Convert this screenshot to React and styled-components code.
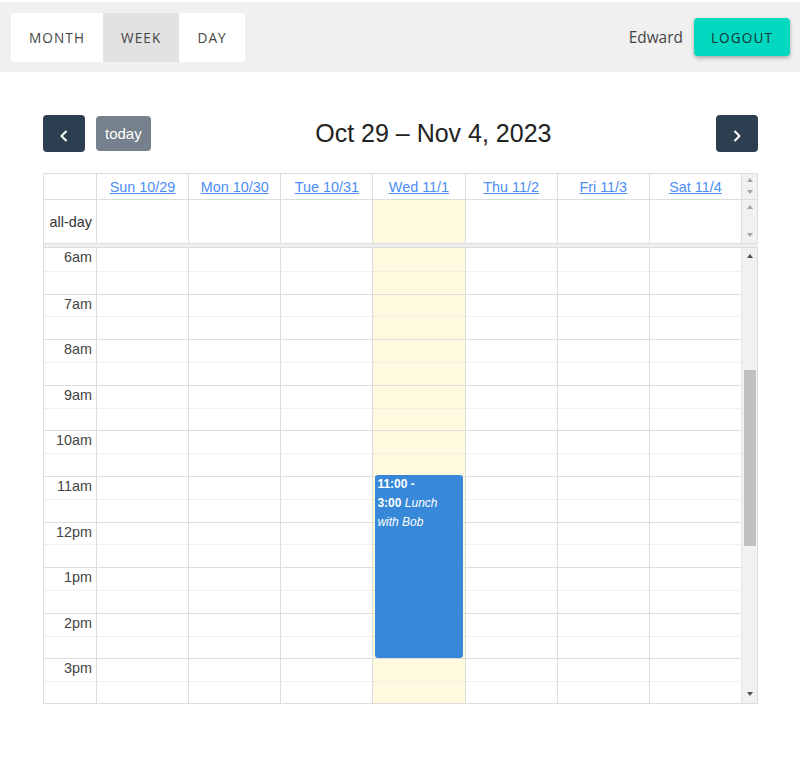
import React from 'react'
import styled, { createGlobalStyle } from 'styled-components';

const GlobalStyle = createGlobalStyle`
  html, body {
    margin: 0;
    padding: 0;
    background: #fff;
  }
  body {
    font-family: "Liberation Sans", Arial, sans-serif;
  }
`;

const SLOT = 22.8;
const HOURS = ['6am', '7am', '8am', '9am', '10am', '11am', '12pm', '1pm', '2pm', '3pm'];
const DAYS = ['Sun 10/29', 'Mon 10/30', 'Tue 10/31', 'Wed 11/1', 'Thu 11/2', 'Fri 11/3', 'Sat 11/4'];
const TODAY = 3;

const TopBar = styled.header`
  margin-top: 2px;
  height: 70px;
  background: #f0f0f0;
  display: flex;
  justify-content: space-between;
  align-items: center;
  padding: 0 10px 0 11px;
  box-sizing: border-box;
  font-family: "Open Sans", sans-serif;
`;

const ViewGroup = styled.div`
  display: flex;
  height: 49px;
  background: #fff;
  border-radius: 4px;
  overflow: hidden;
`;

const ViewButton = styled.button`
  border: none;
  background: ${p => (p.$active ? '#e2e2e2' : '#fff')};
  padding: 0 18px;
  font-family: "Open Sans", sans-serif;
  font-size: 13.6px;
  letter-spacing: 1.1px;
  color: #444;
  text-transform: uppercase;
  cursor: pointer;
`;

const User = styled.div`
  display: flex;
  align-items: center;
  gap: 11px;
`;

const UserName = styled.span`
  font-size: 15.4px;
  color: #444;
`;

const LogoutButton = styled.button`
  height: 38px;
  padding: 0 17px;
  border: none;
  border-radius: 4px;
  background: #00d9c0;
  box-shadow: 0 2px 4px rgba(0, 0, 0, 0.3);
  font-family: "Open Sans", sans-serif;
  font-size: 13.6px;
  letter-spacing: 1.1px;
  color: #173333;
  cursor: pointer;
`;

const Calendar = styled.div`
  margin: 43px 42px 0 43px;
`;

const Toolbar = styled.div`
  display: flex;
  justify-content: space-between;
  align-items: center;
  height: 37px;
  margin-bottom: 21px;
`;

const Chunk = styled.div`
  display: flex;
  align-items: center;
  gap: 11px;
`;

const NavButton = styled.button`
  width: 42px;
  height: 37px;
  border: none;
  border-radius: 4px;
  background: #2c3e50;
  display: flex;
  align-items: center;
  justify-content: center;
  padding: 4px 0 0;
`;

const TodayButton = styled.button`
  height: 35px;
  padding: 0 9px;
  border: none;
  border-radius: 4px;
  background: #2c3e50;
  opacity: 0.65;
  color: #fff;
  font-family: "Liberation Sans", Arial, sans-serif;
  font-size: 15px;
`;

const Title = styled.h2`
  margin: 0;
  font-weight: 400;
  font-size: 25px;
  color: #222;
`;

const Grid = styled.div`
  border: 1px solid #ddd;
  border-right: none;
  border-bottom: none;
  font-size: 14.4px;
  color: #333;
`;

const Row = styled.div`
  display: grid;
  grid-template-columns: 52px repeat(7, 1fr) 17px;
  height: ${p => p.$h}px;
  border-bottom: 1px solid #ddd;
  box-sizing: border-box;
`;

const Cell = styled.div`
  border-left: 1px solid #ddd;
  background: ${p => (p.$today ? '#fff9df' : 'transparent')};
  display: flex;
  align-items: center;
  justify-content: center;
  &:first-child {
    border-left: none;
  }
`;

const DayLink = styled.a`
  color: #4b8df8;
  text-decoration: underline;
  font-size: 14.4px;
`;

const AllDayLabel = styled.div`
  display: flex;
  align-items: center;
  justify-content: flex-end;
  padding-right: 4px;
`;

const Gutter = styled.div`
  border-left: 1px solid #ddd;
  border-right: 1px solid #ddd;
  background: #f1f1f1;
  display: flex;
  flex-direction: column;
  justify-content: space-between;
  align-items: center;
  padding: ${p => p.$pad || '5px 0'};
`;

const Arrow = styled.span`
  width: 0;
  height: 0;
  border-left: 3.5px solid transparent;
  border-right: 3.5px solid transparent;
  ${p => (p.$down ? 'border-top' : 'border-bottom')}: 4px solid ${p => p.$color || '#a3a3a3'};
`;

const Divider = styled.div`
  height: 4px;
  background: #eee;
  border-bottom: 1px solid #ddd;
  box-sizing: border-box;
`;

const Body = styled.div`
  display: grid;
  grid-template-columns: 52px repeat(7, 1fr) 17px;
  height: 455px;
  overflow: hidden;
  border-bottom: 1px solid #ddd;
`;

const Column = styled.div`
  position: relative;
  border-left: ${p => (p.$first ? 'none' : '1px solid #ddd')};
  background: ${p => (p.$today ? '#fff9df' : 'transparent')};
`;

const Slot = styled.div`
  height: ${SLOT}px;
  box-sizing: border-box;
  border-top: 1px ${p => (p.$half ? 'dotted #e6e6e6' : 'solid #ddd')};
  &:first-child {
    border-top: none;
  }
`;

const TimeLabel = styled.div`
  height: ${SLOT}px;
  text-align: right;
  padding: 1px 4px 0 0;
  color: #444;
  line-height: 16px;
`;

const ScrollTrack = styled.div`
  border-left: 1px solid #e6e6e6;
  border-right: 1px solid #ddd;
  background: #f1f1f1;
  display: flex;
  flex-direction: column;
  align-items: center;
  padding: 6px 0 8px;
`;

const Thumb = styled.div`
  width: 12px;
  margin: 112px 0 0 1px;
  height: 176px;
  background: #c1c1c1;
  flex: none;
`;

const Spacer = styled.div`
  flex: 1;
`;

const Event = styled.div`
  position: absolute;
  left: 2px;
  right: 2px;
  border-radius: 3px;
  background: #3788d8;
  color: #fff;
  font-size: 12px;
  line-height: 19px;
  padding: 0 2px;
  box-sizing: border-box;
`;

const EventLine = styled.div`
  white-space: nowrap;
`;

const EventTime = styled.b`
  font-weight: 700;
`;

const EventTitle = styled.i`
  font-style: italic;
`;

const Chevron = ({ dir }) => (
  <svg width="10" height="12" viewBox="0 0 10 12">
    <path
      d={dir === 'left' ? 'M7 1.5 L2.5 6 L7 10.5' : 'M3 1.5 L7.5 6 L3 10.5'}
      fill="none"
      stroke="#fff"
      strokeWidth="2"
      strokeLinecap="round"
      strokeLinejoin="round"
    />
  </svg>
);

const slots = Array.from({ length: HOURS.length * 2 }, (_, i) => i);

const App = () => {
  return (
    <>
      <GlobalStyle />
      <TopBar>
        <ViewGroup>
          <ViewButton>Month</ViewButton>
          <ViewButton $active>Week</ViewButton>
          <ViewButton>Day</ViewButton>
        </ViewGroup>
        <User>
          <UserName>Edward</UserName>
          <LogoutButton>LOGOUT</LogoutButton>
        </User>
      </TopBar>

      <Calendar>
        <Toolbar>
          <Chunk>
            <NavButton><Chevron dir="left" /></NavButton>
            <TodayButton>today</TodayButton>
          </Chunk>
          <Title>Oct 29 – Nov 4, 2023</Title>
          <Chunk>
            <NavButton><Chevron dir="right" /></NavButton>
          </Chunk>
        </Toolbar>

        <Grid>
          <Row $h={26}>
            <Cell />
            {DAYS.map(d => (
              <Cell key={d}><DayLink href="#">{d}</DayLink></Cell>
            ))}
            <Gutter $pad="4px 0 5px">
              <Arrow />
              <Arrow $down />
            </Gutter>
          </Row>
          <Row $h={44}>
            <AllDayLabel>all-day</AllDayLabel>
            {DAYS.map((d, i) => (
              <Cell key={d} $today={i === TODAY} />
            ))}
            <Gutter $pad="5px 0 6px">
              <Arrow />
              <Arrow $down />
            </Gutter>
          </Row>
          <Divider />
          <Body>
            <Column $first>
              {HOURS.map(h => (
                <React.Fragment key={h}>
                  <Slot><TimeLabel>{h}</TimeLabel></Slot>
                  <Slot $half />
                </React.Fragment>
              ))}
            </Column>
            {DAYS.map((d, i) => (
              <Column key={d} $today={i === TODAY}>
                {slots.map(s => (
                  <Slot key={s} $half={s % 2 === 1} />
                ))}
                {i === TODAY && (
                  <Event style={{ top: 5 * 2 * SLOT - 1, height: 4 * 2 * SLOT + 1 }}>
                    <EventLine><EventTime>11:00 -</EventTime></EventLine>
                    <EventLine><EventTime>3:00</EventTime> <EventTitle>Lunch</EventTitle></EventLine>
                    <EventLine><EventTitle>with Bob</EventTitle></EventLine>
                  </Event>
                )}
              </Column>
            ))}
            <ScrollTrack>
              <Arrow $color="#505050" />
              <Thumb />
              <Spacer />
              <Arrow $down $color="#505050" />
            </ScrollTrack>
          </Body>
        </Grid>
      </Calendar>
    </>
  )
}

export default App
